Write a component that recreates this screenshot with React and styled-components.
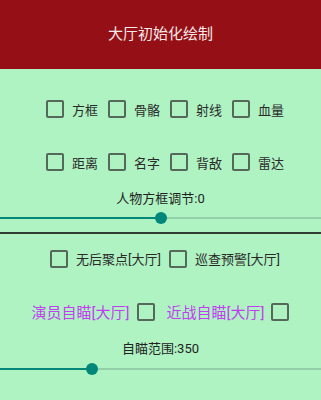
import React from "react"
import styled, { createGlobalStyle } from "styled-components"

const GlobalStyle = createGlobalStyle`
  html, body {
    margin: 0;
    padding: 0;
    background: #b0f3c3;
  }
  body {
    font-family: Roboto, "Noto Sans CJK SC", sans-serif;
  }
`

const Page = styled.div`
  width: 321px;
  height: 400px;
  background: #b0f3c3;
  display: flex;
  flex-direction: column;
  overflow: hidden;
`

const Header = styled.div`
  height: 69px;
  box-sizing: border-box;
  padding-bottom: 5px;
  background: #951016;
  color: #f4eaea;
  font-size: 15px;
  display: flex;
  align-items: center;
  justify-content: center;
`

const Row = styled.div`
  height: 36px;
  margin-top: ${(p) => p.$top}px;
  padding-left: ${(p) => p.$shift || 0}px;
  display: flex;
  align-items: center;
  justify-content: center;
  gap: ${(p) => p.$gap}px;
`

const Check = styled.label`
  display: flex;
  align-items: center;
  gap: 8px;
  font-size: 13px;
  color: #2a2a2a;
`

const Box = styled.span`
  width: 18px;
  height: 18px;
  box-sizing: border-box;
  border: 2px solid #55695a;
  border-radius: 2px;
  flex: none;
`

const Aim = styled.div`
  display: flex;
  align-items: center;
  gap: 7px;
  font-size: 15px;
  color: #c03ef0;
`

const Caption = styled.div`
  height: 20px;
  margin-top: ${(p) => p.$top}px;
  display: flex;
  align-items: center;
  justify-content: center;
  font-size: 13px;
  color: #222;
`

const SliderWrap = styled.div`
  position: relative;
  height: 20px;
  margin-top: 1px;
`

const Track = styled.div`
  position: absolute;
  left: 0;
  right: 0;
  top: 9px;
  height: 2px;
  background: #93cfa8;
`

const Fill = styled.div`
  position: absolute;
  left: 0;
  top: 9px;
  height: 2px;
  background: #00877a;
`

const Thumb = styled.div`
  position: absolute;
  top: 4px;
  width: 12px;
  height: 12px;
  margin-left: -6px;
  border-radius: 50%;
  background: #00877a;
`

const Divider = styled.div`
  height: 1.5px;
  margin-top: 4px;
  background: #2f3d33;
`

const Slider = ({ pos }) => (
  <SliderWrap>
    <Track />
    <Fill style={{ width: pos }} />
    <Thumb style={{ left: pos }} />
  </SliderWrap>
)

const CheckItem = ({ children }) => (
  <Check>
    <Box />
    {children}
  </Check>
)

const App = () => {
  return (
    <Page>
      <GlobalStyle />
      <Header>大厅初始化绘制</Header>

      <Row $top={22} $gap={10} $shift={9}>
        <CheckItem>方框</CheckItem>
        <CheckItem>骨骼</CheckItem>
        <CheckItem>射线</CheckItem>
        <CheckItem>血量</CheckItem>
      </Row>
      <Row $top={17} $gap={10} $shift={9}>
        <CheckItem>距离</CheckItem>
        <CheckItem>名字</CheckItem>
        <CheckItem>背敌</CheckItem>
        <CheckItem>雷达</CheckItem>
      </Row>

      <Caption $top={7}>人物方框调节:0</Caption>
      <Slider pos={161} />
      <Divider />

      <Row $top={7} $gap={8} $shift={9}>
        <CheckItem>无后聚点[大厅]</CheckItem>
        <CheckItem>巡查预警[大厅]</CheckItem>
      </Row>

      <Row $top={17} $gap={12}>
        <Aim>
          演员自瞄[大厅]
          <Box />
        </Aim>
        <Aim>
          近战自瞄[大厅]
          <Box />
        </Aim>
      </Row>

      <Caption $top={8}>自瞄范围:350</Caption>
      <Slider pos={92} />
    </Page>
  )
}

export default App
